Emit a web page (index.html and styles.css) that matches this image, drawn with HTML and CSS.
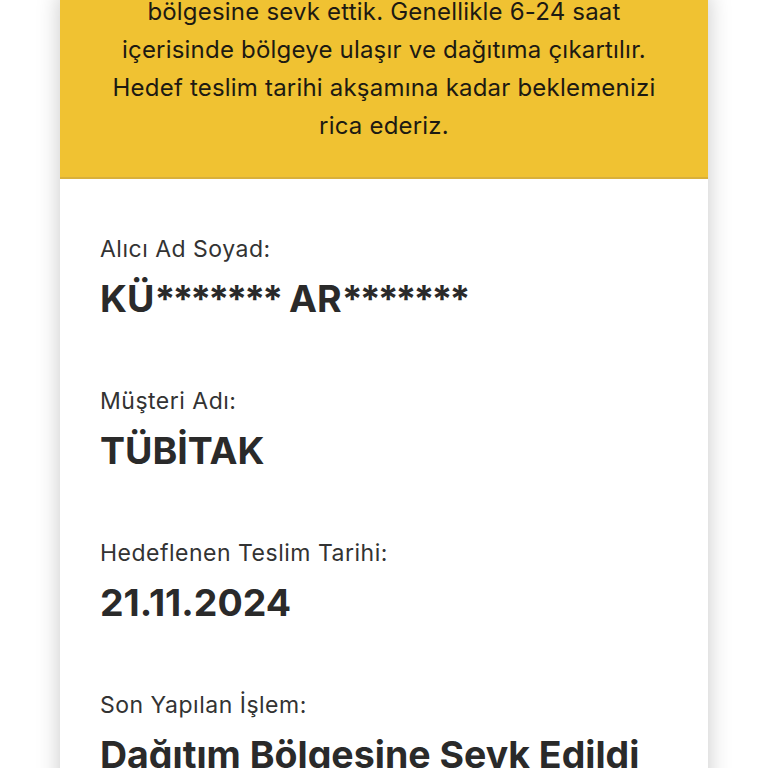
FILE: index.html
```html
<!DOCTYPE html>
<html lang="tr">
<head>
    <meta charset="UTF-8">
    <meta name="viewport" content="width=device-width, initial-scale=1.0">
    <title>Gönderi Takip</title>
    <link rel="stylesheet" href="styles.css">
</head>
<body>
    <div class="card">
        <div class="notice">
            <p>bölgesine sevk ettik. Genellikle 6-24 saat<br>
            içerisinde bölgeye ulaşır ve dağıtıma çıkartılır.<br>
            Hedef teslim tarihi akşamına kadar beklemenizi<br>
            rica ederiz.</p>
        </div>
        <div class="details">
            <div class="field">
                <div class="label">Alıcı Ad Soyad:</div>
                <div class="value">KÜ<span class="mask">*******</span> AR<span class="mask">*******</span></div>
            </div>
            <div class="field">
                <div class="label">Müşteri Adı:</div>
                <div class="value">TÜBİTAK</div>
            </div>
            <div class="field">
                <div class="label">Hedeflenen Teslim Tarihi:</div>
                <div class="value">21.11.2024</div>
            </div>
            <div class="field">
                <div class="label">Son Yapılan İşlem:</div>
                <div class="value">Dağıtım Bölgesine Sevk Edildi</div>
            </div>
        </div>
    </div>
</body>
</html>
```

FILE: styles.css
```css
body {
    font-family: Inter, "Noto Sans", sans-serif;
    background-color: #fff;
    margin: 0;
    overflow: hidden;
}
.card {
    margin: 0 60px;
    background: #fff;
    box-shadow: 0 0 22px rgba(0, 0, 0, 0.22);
}
.notice {
    background-color: #f0c232;
    border-bottom: 2px solid #d9b03a;
    padding: 0 20px 32px;
    text-align: center;
    color: #1d1a12;
    font-size: 24px;
    line-height: 38px;
    letter-spacing: 0.2px;
}
.notice p {
    margin: -7px 0 0;
}
.details {
    padding: 55px 40px 40px;
}
.field {
    margin-bottom: 64px;
}
.label {
    font-size: 23px;
    line-height: 30px;
    letter-spacing: 0.5px;
    color: #333;
}
.value {
    margin-top: 12px;
    font-size: 37.5px;
    line-height: 46px;
    font-weight: 700;
    color: #2a2a2a;
}
.value .mask {
    letter-spacing: -3px;
}
```
